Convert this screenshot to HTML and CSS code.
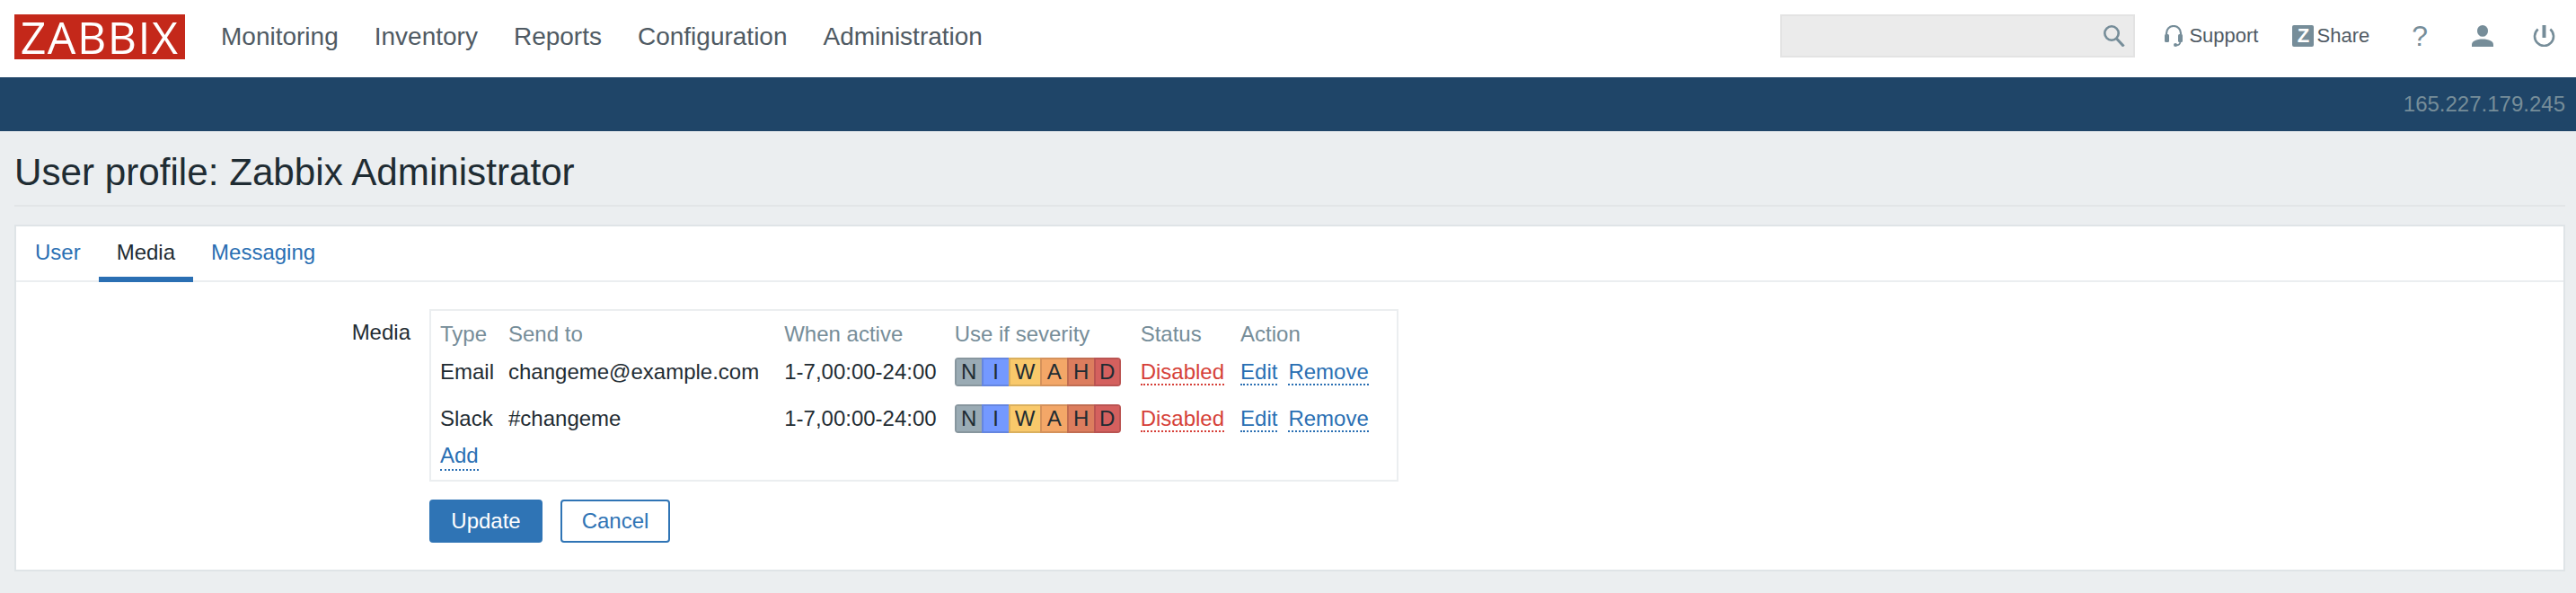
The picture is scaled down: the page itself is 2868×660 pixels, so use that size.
FILE: index.html
```html
<!DOCTYPE html>
<html lang="en">
<head>
  <meta charset="UTF-8" />
  <title>User profile: Zabbix Administrator</title>
  <link rel="stylesheet" href="styles.css">
</head>
<body>
  <header class="topbar">
    <a class="logo">ZABBIX</a>
    <nav class="mainnav">
      <a>Monitoring</a>
      <a>Inventory</a>
      <a>Reports</a>
      <a>Configuration</a>
      <a>Administration</a>
    </nav>
    <div class="tools">
      <div class="search">
        <svg width="24" height="24" viewBox="0 0 24 24"><circle cx="9" cy="9" r="7.7" fill="none" stroke="#768d99" stroke-width="2.6"/><path d="M14.5 15l8 8.6" stroke="#768d99" stroke-width="3" fill="none"/></svg>
      </div>
      <a class="tool tool-support">
        <svg width="20" height="24" viewBox="0 0 20 24"><path d="M2 13V9a8 8 0 0 1 16 0v4" fill="none" stroke="#768d99" stroke-width="2.2"/><rect x="0" y="10" width="5" height="9" rx="1.5" fill="#768d99"/><rect x="15" y="10" width="5" height="9" rx="1.5" fill="#768d99"/><path d="M17.5 18c0 3-2 4.5-5 4.5" fill="none" stroke="#768d99" stroke-width="1.8"/><circle cx="12" cy="22" r="2" fill="#768d99"/></svg>
        Support
      </a>
      <a class="tool tool-share"><span class="zbox">Z</span>Share</a>
      <a class="tool-help">?</a>
      <a class="tool-user">
        <svg width="24" height="24" viewBox="0 0 24 24"><ellipse cx="12" cy="6.4" rx="6" ry="6.4" fill="#768d99"/><path d="M0 24v-2.5c0-3.500 5-6 12-6s12 2.500 12 6V24z" fill="#768d99"/></svg>
      </a>
      <a class="tool-power">
        <svg width="25" height="24" viewBox="0 0 25 24"><path d="M5.700 4.500a10.500 10.500 0 1 0 13.600 0" fill="none" stroke="#768d99" stroke-width="2.600"/><path d="M12.500 0v14" stroke="#768d99" stroke-width="4"/></svg>
      </a>
    </div>
  </header>
  <div class="subbar"><span>165.227.179.245</span></div>

  <main class="content">
    <h1 class="page-title">User profile: Zabbix Administrator</h1>
    <section class="panel">
      <ul class="tabs">
        <li><a>User</a></li>
        <li class="active"><a>Media</a></li>
        <li><a>Messaging</a></li>
      </ul>
      <div class="form">
        <div class="form-label">Media</div>
        <div class="form-body">
          <div class="media-box">
            <table class="media-table">
              <thead>
                <tr>
                  <th>Type</th><th>Send to</th><th>When active</th><th>Use if severity</th><th>Status</th><th>Action</th>
                </tr>
              </thead>
              <tbody>
                <tr>
                  <td>Email</td>
                  <td>changeme@example.com</td>
                  <td>1-7,00:00-24:00</td>
                  <td>
                    <div class="sev">
                      <span class="s-n">N</span><span class="s-i">I</span><span class="s-w">W</span><span class="s-a">A</span><span class="s-h">H</span><span class="s-d">D</span>
                    </div>
                  </td>
                  <td><a class="link red">Disabled</a></td>
                  <td class="actions"><a class="link">Edit</a><a class="link">Remove</a></td>
                </tr>
                <tr>
                  <td>Slack</td>
                  <td>#changeme</td>
                  <td>1-7,00:00-24:00</td>
                  <td>
                    <div class="sev">
                      <span class="s-n">N</span><span class="s-i">I</span><span class="s-w">W</span><span class="s-a">A</span><span class="s-h">H</span><span class="s-d">D</span>
                    </div>
                  </td>
                  <td><a class="link red">Disabled</a></td>
                  <td class="actions"><a class="link">Edit</a><a class="link">Remove</a></td>
                </tr>
              </tbody>
            </table>
            <a class="link add">Add</a>
          </div>
          <div class="buttons">
            <button class="btn btn-main">Update</button>
            <button class="btn btn-alt">Cancel</button>
          </div>
        </div>
      </div>
    </section>
  </main>
</body>
</html>
```

FILE: styles.css
```css
* { box-sizing: border-box; }
html, body { margin: 0; height: 100%; }
body { background: #ebeef0; font-family: "Liberation Sans", Arial, sans-serif; font-size: 24px; color: #1f2c33; overflow: hidden; }

.topbar { display: flex; align-items: center; height: 86px; padding: 0 23px 4px 16px; background: #fff; }
.logo { display: block; width: 190px; height: 50px; background: #c4281a; color: #fff; font-family: "Open Sans", sans-serif; font-size: 50px; line-height: 50px; letter-spacing: 1.5px; text-align: center; }
.mainnav { display: flex; gap: 40px; margin-left: 40px; font-size: 28px; color: #4f5a63; }
.tools { display: flex; align-items: center; margin-left: auto; padding-bottom: 2px; font-size: 22px; color: #4f5a63; }
.search { display: flex; align-items: center; justify-content: flex-end; width: 395px; height: 48px; padding-right: 9px; background: #ebebeb; border: 2px solid #e3e3e3; }
.tool { display: flex; align-items: center; }
.tool-support { margin-left: 33px; gap: 7px; }
.tool-share { margin-left: 38px; gap: 3px; }
.zbox { display: block; width: 24px; height: 24px; background: #768d99; color: #fff; border-radius: 2px; font-size: 22px; font-weight: bold; line-height: 24px; text-align: center; }
.tool-help { margin-left: 47px; font-size: 32px; color: #768d99; }
.tool-user { margin-left: 49px; display: flex; }
.tool-power { margin-left: 44px; display: flex; }

.subbar { display: flex; align-items: center; justify-content: flex-end; height: 60px; padding-right: 12px; background: #1f4568; color: #768d99; font-size: 24px; }

.content { padding: 0 12px 0 16px; }
.page-title { margin: 0; padding: 22px 0 0; height: 84px; border-bottom: 2px solid #e2e5e7; font-size: 42.2px; font-weight: normal; line-height: 48px; color: #1f2c33; }

.panel { margin-top: 20px; height: 386px; background: #fff; border: 2px solid #dfe4e7; }
.tabs { display: flex; margin: 0; padding: 0; height: 62px; list-style: none; border-bottom: 2px solid #ebeef0; color: #2a6fb3; }
.tabs li { display: flex; align-items: center; padding: 2px 20px 0; height: 62px; border-bottom: 6px solid transparent; }
.tabs li:first-child { padding-left: 21px; }
.tabs .active { color: #1f2c33; border-bottom-color: #2a6fb3; }

.form { display: flex; padding-top: 30px; }
.form-label { width: 460px; padding-top: 12px; padding-right: 21px; text-align: right; }
.form-body { flex: none; width: 1079px; }
.media-box { height: 192px; padding: 12px 10px 0; border: 2px solid #ebeef0; }
.media-table { border-collapse: collapse; }
.media-table th { padding: 0 20px 12px 0; color: #768d99; font-weight: normal; text-align: left; line-height: 28px; }
.media-table td { padding: 0 20px 20px 0; line-height: 32px; white-space: nowrap; }
.media-table th:first-child, .media-table td:first-child { padding-right: 16px; }
.media-table th:nth-child(2), .media-table td:nth-child(2) { padding-right: 28px; }
.media-table th:nth-child(4), .media-table td:nth-child(4) { padding-right: 22px; }
.media-table th:nth-child(5), .media-table td:nth-child(5) { padding-right: 18px; }
.media-table tr:last-child td { padding-bottom: 10px; }
.actions .link + .link { margin-left: 12px; }
.link { color: #2a6fb3; border-bottom: 2px dotted #2a6fb3; }
.link.red { color: #d63f38; border-bottom-color: #d63f38; }
.add { display: inline-block; line-height: 30px; }

.sev { display: flex; width: 185px; height: 32px; border-radius: 4px; overflow: hidden; }
.sev span { display: flex; flex: none; width: 30px; align-items: center; justify-content: center; border: 2px solid rgba(0,0,0,0.12); border-width: 2px 0 2px 2px; }
.sev span:last-child { border-right-width: 2px; }
.sev .s-w { width: 35px; }
.s-n { background: #9aabb4; }
.s-i { background: #7499ff; }
.s-w { background: #f9c96b; }
.s-a { background: #f3a768; }
.s-h { background: #dc7d5e; }
.s-d { background: #d4605e; }

.buttons { display: flex; gap: 20px; margin-top: 20px; }
.btn { height: 48px; padding: 0; border: 2px solid #2f74b5; border-radius: 4px; font-family: inherit; font-size: 24px; }
.btn-main { width: 126px; background: #2f74b5; color: #fff; }
.btn-alt { width: 122px; background: #fff; color: #2f74b5; }
```
